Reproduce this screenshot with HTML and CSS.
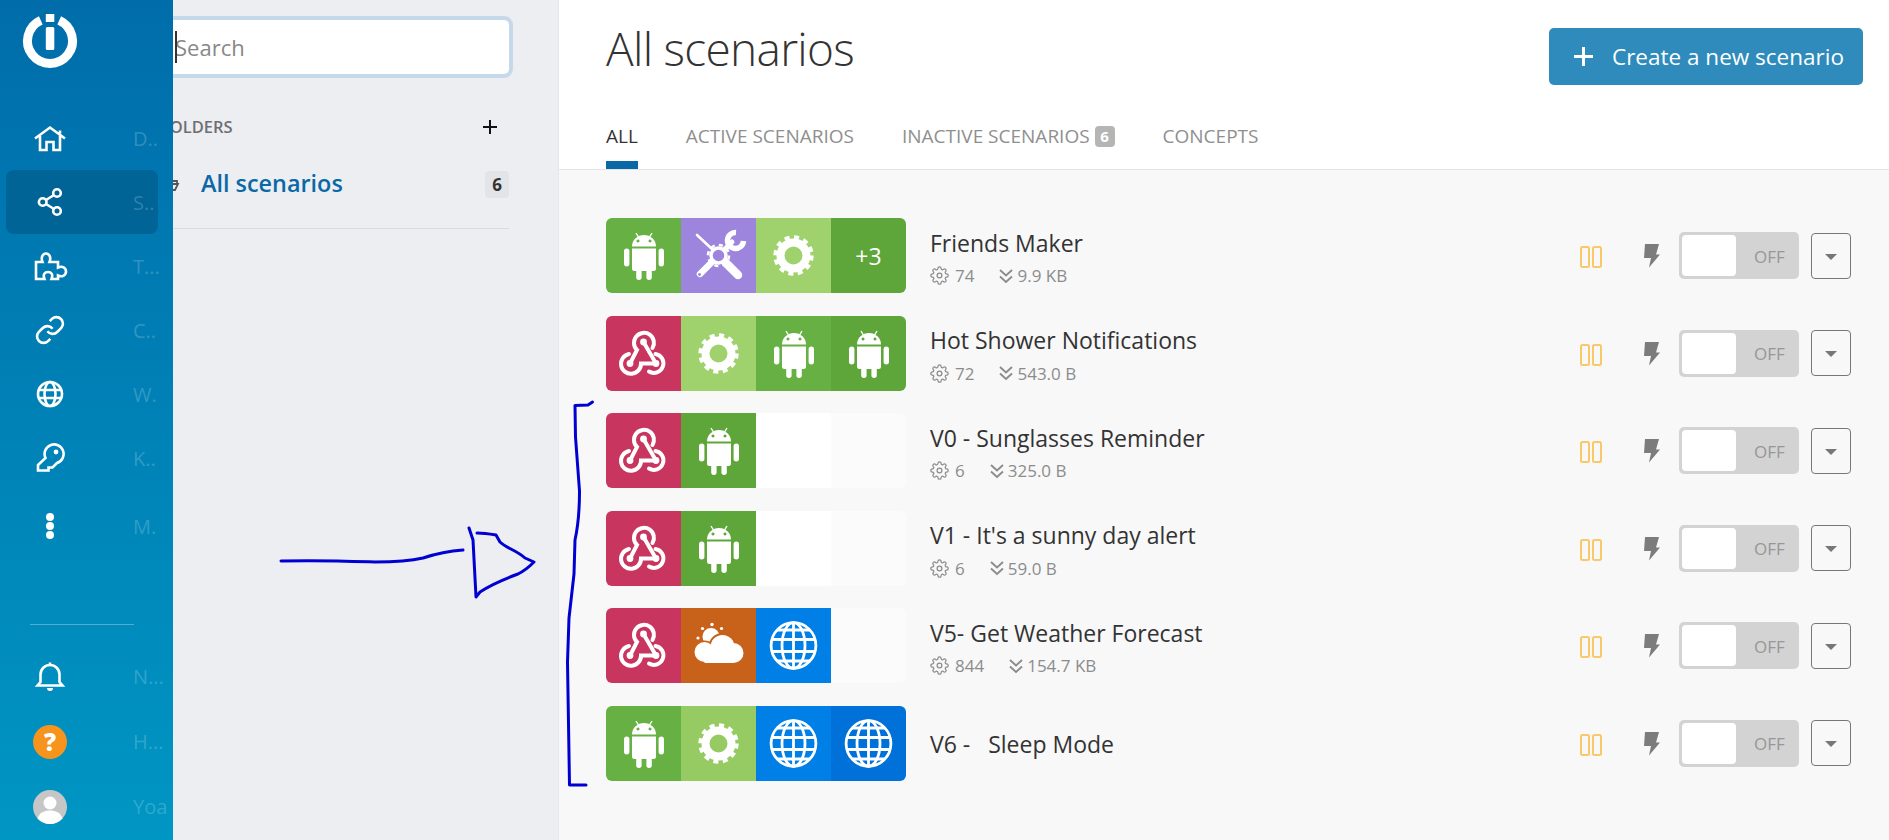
FILE: index.html
```html
<!DOCTYPE html>
<html lang="en">
  <head>
    <meta charset="UTF-8" />
    <meta name="viewport" content="width=device-width, initial-scale=1.0" />
    <title>All scenarios</title>
    <link rel="stylesheet" href="styles.css">
  </head>
  <body>
    <!-- Shared icons -->
    <svg class="icon-defs" aria-hidden="true">
      <symbol id="android" viewBox="0 0 75 75">
        <path fill-rule="evenodd" d="M26 28.5a12 11.5 0 0 1 24 0zM32 21.5a1.5 1.5 0 1 0 .01 0zM44 21.5a1.5 1.5 0 1 0 .01 0z" fill="currentColor"/>
        <path d="M30 15l3 5M46 15l-3 5" stroke="currentColor" stroke-width="1.4" fill="none"/>
        <path d="M26 30.5h24v20a2.5 2.5 0 0 1-2.5 2.5h-19a2.5 2.5 0 0 1-2.5-2.5z" fill="currentColor"/>
        <rect x="18" y="30.5" width="5.4" height="18" rx="2.7" fill="currentColor"/>
        <rect x="52.6" y="30.5" width="5.4" height="18" rx="2.7" fill="currentColor"/>
        <rect x="30.2" y="50" width="5.4" height="12" rx="2.7" fill="currentColor"/>
        <rect x="40.4" y="50" width="5.4" height="12" rx="2.7" fill="currentColor"/>
      </symbol>
      <symbol id="gear" viewBox="0 0 75 75">
        <circle cx="37.5" cy="37.5" r="13" fill="none" stroke="currentColor" stroke-width="8"/>
        <circle cx="37.5" cy="37.5" r="18" fill="none" stroke="currentColor" stroke-width="4.4" stroke-dasharray="5 4.42"/>
      </symbol>
      <symbol id="webhook" viewBox="0 0 75 75">
        <g fill="none" stroke="currentColor" stroke-width="4" stroke-linecap="round">
          <path d="M24 47.5L31 34A10 10 0 1 1 46.5 32"/>
          <path d="M37.5 26L50 47.5"/>
          <path d="M23 38A10 10 0 1 0 35 47.5H50"/>
          <path d="M49.5 38A9.5 9.5 0 1 1 43 55.5"/>
        </g>
        <g fill="currentColor">
          <circle cx="37.5" cy="26" r="3.4"/>
          <circle cx="24" cy="47.5" r="3.4"/>
          <circle cx="50" cy="47.5" r="3.4"/>
        </g>
      </symbol>
      <symbol id="globe" viewBox="0 0 75 75">
        <g fill="none" stroke="currentColor" stroke-width="2.8">
          <ellipse cx="37.5" cy="37.5" rx="22.4" ry="22.8"/>
          <ellipse cx="37.5" cy="37.5" rx="11.5" ry="22.8"/>
          <path d="M37.5 15v45M15.5 31.5h44M15.5 43.5h44M21 22h33M21 53h33"/>
        </g>
      </symbol>
      <symbol id="cog" viewBox="0 0 24 24">
        <circle cx="12" cy="12" r="3"/>
        <path d="M19.4 15a1.65 1.65 0 0 0 .33 1.82l.06.06a2 2 0 0 1 0 2.83 2 2 0 0 1-2.83 0l-.06-.06a1.65 1.65 0 0 0-1.82-.33 1.65 1.65 0 0 0-1 1.51V21a2 2 0 0 1-2 2 2 2 0 0 1-2-2v-.09A1.65 1.65 0 0 0 9 19.4a1.65 1.65 0 0 0-1.82.33l-.06.06a2 2 0 0 1-2.83 0 2 2 0 0 1 0-2.83l.06-.06a1.65 1.65 0 0 0 .33-1.82 1.65 1.65 0 0 0-1.51-1H3a2 2 0 0 1-2-2 2 2 0 0 1 2-2h.09A1.65 1.65 0 0 0 4.6 9a1.65 1.65 0 0 0-.33-1.82l-.06-.06a2 2 0 0 1 0-2.83 2 2 0 0 1 2.83 0l.06.06a1.65 1.65 0 0 0 1.82.33H9a1.65 1.65 0 0 0 1-1.51V3a2 2 0 0 1 2-2 2 2 0 0 1 2 2v.09a1.65 1.65 0 0 0 1 1.51 1.65 1.65 0 0 0 1.82-.33l.06-.06a2 2 0 0 1 2.83 0 2 2 0 0 1 0 2.83l-.06.06a1.65 1.65 0 0 0-.33 1.82V9a1.65 1.65 0 0 0 1.51 1H21a2 2 0 0 1 2 2 2 2 0 0 1-2 2h-.09a1.65 1.65 0 0 0-1.51 1z"/>
      </symbol>
      <symbol id="chevrons" viewBox="0 0 16 16">
        <path d="M2 2l6 5.5L14 2M2 8.5L8 14l6-5.5" fill="none" stroke="currentColor" stroke-width="1.9"/>
      </symbol>
      <symbol id="pause" viewBox="0 0 22 22">
        <rect x="1" y="1" width="8" height="20" rx="1.5" fill="none" stroke="#f9c869" stroke-width="2"/>
        <rect x="13" y="1" width="8" height="20" rx="1.5" fill="none" stroke="#f9c869" stroke-width="2"/>
      </symbol>
      <symbol id="bolt" viewBox="0 0 16 25">
        <path d="M1 1h14l-3 10.5h4L5 24.5l2-9.5H0z" fill="#7c7c7c"/>
      </symbol>
    </svg>

    <!-- Left menu -->
    <aside class="sidebar">
      <div class="logo">
        <svg width="60" height="60" viewBox="0 0 60 60">
          <path d="M20.8 9.4A22.5 22.5 0 1 0 39.2 9.4" fill="none" stroke="#fff" stroke-width="9"/>
          <rect x="25.8" y="3" width="8.5" height="8" fill="#fff"/>
          <rect x="25.8" y="16" width="8.5" height="23" rx="1.5" fill="#fff"/>
        </svg>
      </div>
      <nav class="nav">
        <a class="nav-item">
          <svg class="nav-icon" viewBox="0 0 40 30"><path d="M5 15.5L20 4.5 35 15.5M30 7.500v3M10 13v14h6.500v-8h7v8H30V13"/></svg>
          <span class="nav-label">D..</span>
        </a>
        <a class="nav-item active">
          <svg class="nav-icon" viewBox="0 0 40 30"><circle cx="27" cy="6" r="3.8"/><circle cx="12.7" cy="15" r="3.8"/><circle cx="27" cy="24" r="3.8"/><path d="M16 13l8-5M16 17l8 5"/></svg>
          <span class="nav-label">S..</span>
        </a>
        <a class="nav-item">
          <svg class="nav-icon" viewBox="0 0 40 30"><path d="M6 11h6.500c-2-5 .5-8.500 3.500-8.500s5.500 3.500 3.500 8.500H28v5.500c4.500-2 8 .5 8 4s-3.500 6-8 4V28h-6.500c2-5-.5-7-3.500-7s-5.500 2-3.500 7H6z"/></svg>
          <span class="nav-label">T...</span>
        </a>
        <a class="nav-item">
          <svg class="nav-icon" viewBox="0 0 40 30"><g transform="translate(4.4 -.6) scale(1.3)" stroke-width="2"><path d="M10 13a5 5 0 0 0 7.54.54l3-3a5 5 0 0 0-7.07-7.07l-1.72 1.71"/><path d="M14 11a5 5 0 0 0-7.54-.54l-3 3a5 5 0 0 0 7.07 7.07l1.71-1.71"/></g></svg>
          <span class="nav-label">C..</span>
        </a>
        <a class="nav-item">
          <svg class="nav-icon" viewBox="0 0 40 30"><circle cx="20" cy="15" r="12"/><ellipse cx="20" cy="15" rx="5.5" ry="12"/><path d="M8.500 11h23M8.500 19h23"/></svg>
          <span class="nav-label">W.</span>
        </a>
        <a class="nav-item">
          <svg class="nav-icon" viewBox="0 0 40 30"><path d="M15.5 15A9.5 9.5 0 1 1 27 20L22.5 24.5H18.5V27.5H8V22z"/><circle class="dot" cx="26" cy="9" r="2.4"/></svg>
          <span class="nav-label">K..</span>
        </a>
        <a class="nav-item more-item">
          <svg class="nav-icon" viewBox="0 0 40 30"><circle class="dot" cx="20" cy="6" r="4"/><circle class="dot" cx="20" cy="15" r="4"/><circle class="dot" cx="20" cy="24" r="4"/></svg>
          <span class="nav-label">M.</span>
        </a>
      </nav>
      <div class="nav-divider"></div>
      <div class="nav-bottom">
        <a class="bottom-item">
          <svg class="nav-icon" viewBox="0 0 40 30"><path d="M10.5 20v-7.500a9.500 9.500 0 0 1 19 0V20l3 3.500h-25zM20 .5V3"/><path class="dot" d="M17 26h6a3 3 0 0 1-6 0z"/></svg>
          <span class="nav-label">N...</span>
        </a>
        <a class="bottom-item">
          <span class="nav-slot"><span class="help">?</span></span>
          <span class="nav-label">H...</span>
        </a>
        <a class="bottom-item">
          <span class="nav-slot">
            <svg class="avatar" viewBox="0 0 34 34">
              <circle cx="17" cy="17" r="17" fill="#c6c6c6"/>
              <circle cx="17" cy="13" r="6.5" fill="#fff"/>
              <path d="M4.5 28.500c2-6 7-8 12.500-8s10.500 2 12.500 8A17 17 0 0 1 17 34 17 17 0 0 1 4.500 28.500z" fill="#fff"/>
            </svg>
          </span>
          <span class="nav-label">Yoa</span>
        </a>
      </div>
    </aside>

    <!-- Folders -->
    <section class="panel">
      <div class="search">
        <span class="caret"></span>
        Search
      </div>
      <div class="folders-head">
        <span>FOLDERS</span>
        <svg class="folder-add" viewBox="0 0 14 14"><path d="M7 0v14M0 7h14" stroke="#111" stroke-width="2"/></svg>
      </div>
      <div class="folder-row">
        <svg class="folder-icon" viewBox="0 0 22 16"><path d="M2 3h6l2 2h8v3M2 3v11h14l3-6H6l-3 6" fill="none" stroke="#555" stroke-width="1.8"/></svg>
        <span class="folder-name">All scenarios</span>
        <span class="folder-count">6</span>
      </div>
      <div class="panel-divider"></div>
    </section>

    <!-- Main Content -->
    <main class="main">
      <header class="main-head">
        <div class="title-row">
          <h1>All scenarios</h1>
          <a class="create-btn">
            <svg viewBox="0 0 19 19"><path d="M9.5 0v19M0 9.5h19" stroke="#fff" stroke-width="3"/></svg>
            Create a new scenario
          </a>
        </div>
        <div class="tabs">
          <a class="tab selected">ALL</a>
          <a class="tab">ACTIVE SCENARIOS</a>
          <a class="tab">INACTIVE SCENARIOS <span class="tab-count">6</span></a>
          <a class="tab">CONCEPTS</a>
        </div>
      </header>

      <div class="list">
        <div class="row">
          <div class="strip">
            <div class="tile android-a"><svg><use href="#android"/></svg></div>
            <div class="tile tools">
              <svg viewBox="0 0 75 75">
                <g fill="none" stroke="#fff" stroke-linecap="round">
                  <path d="M16 17l16 15" stroke-width="2.6"/>
                  <path d="M45 45l12 12" stroke-width="8.5"/>
                  <path d="M19 56l12-12" stroke-width="6.5"/>
                  <path d="M44 31l7-7" stroke-width="5"/>
                  <path d="M55 14.5a8 8 0 1 0 7.5 8.5" stroke-width="5.5" stroke-linecap="butt"/>
                  <circle cx="37.5" cy="37.5" r="7.5" stroke-width="3.5"/>
                  <circle cx="37.5" cy="37.5" r="10.5" stroke-width="2.6" stroke-dasharray="4.1 4.15" stroke-linecap="butt"/>
                </g>
                <circle cx="18.5" cy="56.5" r="1.4" fill="#9d85dd"/>
              </svg>
            </div>
            <div class="tile gear-a"><svg><use href="#gear"/></svg></div>
            <div class="tile android-b more">+3</div>
          </div>
          <div class="info">
            <div class="name">Friends Maker</div>
            <div class="meta">
              <svg class="meta-cog"><use href="#cog"/></svg><span class="meta-ops">74</span>
              <svg class="meta-chev"><use href="#chevrons"/></svg><span>9.9 KB</span>
            </div>
          </div>
          <div class="controls">
            <svg class="pause"><use href="#pause"/></svg>
            <svg class="bolt"><use href="#bolt"/></svg>
            <div class="toggle"><span class="knob"></span><span class="off">OFF</span></div>
            <button class="drop"><span class="drop-caret"></span></button>
          </div>
        </div>

        <div class="row">
          <div class="strip">
            <div class="tile hook"><svg><use href="#webhook"/></svg></div>
            <div class="tile gear-a"><svg><use href="#gear"/></svg></div>
            <div class="tile android-a"><svg><use href="#android"/></svg></div>
            <div class="tile android-b"><svg><use href="#android"/></svg></div>
          </div>
          <div class="info">
            <div class="name">Hot Shower Notifications</div>
            <div class="meta">
              <svg class="meta-cog"><use href="#cog"/></svg><span class="meta-ops">72</span>
              <svg class="meta-chev"><use href="#chevrons"/></svg><span>543.0 B</span>
            </div>
          </div>
          <div class="controls">
            <svg class="pause"><use href="#pause"/></svg>
            <svg class="bolt"><use href="#bolt"/></svg>
            <div class="toggle"><span class="knob"></span><span class="off">OFF</span></div>
            <button class="drop"><span class="drop-caret"></span></button>
          </div>
        </div>

        <div class="row">
          <div class="strip">
            <div class="tile hook"><svg><use href="#webhook"/></svg></div>
            <div class="tile android-b"><svg><use href="#android"/></svg></div>
            <div class="tile empty-a"></div>
            <div class="tile empty-b"></div>
          </div>
          <div class="info">
            <div class="name">V0 - Sunglasses Reminder</div>
            <div class="meta">
              <svg class="meta-cog"><use href="#cog"/></svg><span class="meta-ops">6</span>
              <svg class="meta-chev"><use href="#chevrons"/></svg><span>325.0 B</span>
            </div>
          </div>
          <div class="controls">
            <svg class="pause"><use href="#pause"/></svg>
            <svg class="bolt"><use href="#bolt"/></svg>
            <div class="toggle"><span class="knob"></span><span class="off">OFF</span></div>
            <button class="drop"><span class="drop-caret"></span></button>
          </div>
        </div>

        <div class="row">
          <div class="strip">
            <div class="tile hook"><svg><use href="#webhook"/></svg></div>
            <div class="tile android-b"><svg><use href="#android"/></svg></div>
            <div class="tile empty-a"></div>
            <div class="tile empty-b"></div>
          </div>
          <div class="info">
            <div class="name">V1 - It's a sunny day alert</div>
            <div class="meta">
              <svg class="meta-cog"><use href="#cog"/></svg><span class="meta-ops">6</span>
              <svg class="meta-chev"><use href="#chevrons"/></svg><span>59.0 B</span>
            </div>
          </div>
          <div class="controls">
            <svg class="pause"><use href="#pause"/></svg>
            <svg class="bolt"><use href="#bolt"/></svg>
            <div class="toggle"><span class="knob"></span><span class="off">OFF</span></div>
            <button class="drop"><span class="drop-caret"></span></button>
          </div>
        </div>

        <div class="row">
          <div class="strip">
            <div class="tile hook"><svg><use href="#webhook"/></svg></div>
            <div class="tile weather">
              <svg viewBox="0 0 75 75">
                <g fill="#fff">
                  <circle cx="30" cy="28.5" r="8.5"/>
                  <circle cx="21.5" cy="20.5" r="1.6"/>
                  <circle cx="31" cy="16.5" r="1.7"/>
                  <circle cx="40.5" cy="20.5" r="1.6"/>
                  <circle cx="17" cy="30" r="1.6"/>
                </g>
                <g fill="#fff" stroke="#c8621a" stroke-width="4">
                  <circle cx="41.5" cy="39" r="12"/>
                  <circle cx="23.5" cy="44" r="9.5"/>
                </g>
                <g fill="#fff">
                  <circle cx="41.5" cy="39" r="12"/>
                  <circle cx="23.5" cy="44" r="10"/>
                  <circle cx="52.5" cy="45" r="10"/>
                  <rect x="23.5" y="42" width="29" height="13"/>
                </g>
              </svg>
            </div>
            <div class="tile globe-a"><svg><use href="#globe"/></svg></div>
            <div class="tile empty-b"></div>
          </div>
          <div class="info">
            <div class="name">V5- Get Weather Forecast</div>
            <div class="meta">
              <svg class="meta-cog"><use href="#cog"/></svg><span class="meta-ops">844</span>
              <svg class="meta-chev"><use href="#chevrons"/></svg><span>154.7 KB</span>
            </div>
          </div>
          <div class="controls">
            <svg class="pause"><use href="#pause"/></svg>
            <svg class="bolt"><use href="#bolt"/></svg>
            <div class="toggle"><span class="knob"></span><span class="off">OFF</span></div>
            <button class="drop"><span class="drop-caret"></span></button>
          </div>
        </div>

        <div class="row">
          <div class="strip">
            <div class="tile android-a"><svg><use href="#android"/></svg></div>
            <div class="tile gear-b"><svg><use href="#gear"/></svg></div>
            <div class="tile globe-a"><svg><use href="#globe"/></svg></div>
            <div class="tile globe-b"><svg><use href="#globe"/></svg></div>
          </div>
          <div class="info">
            <div class="name">V6 -&nbsp;&nbsp; Sleep Mode</div>
          </div>
          <div class="controls">
            <svg class="pause"><use href="#pause"/></svg>
            <svg class="bolt"><use href="#bolt"/></svg>
            <div class="toggle"><span class="knob"></span><span class="off">OFF</span></div>
            <button class="drop"><span class="drop-caret"></span></button>
          </div>
        </div>
      </div>
    </main>

    <!-- Hand drawn marks on top of the screenshot -->
    <svg class="marks" viewBox="0 0 1889 840">
      <g fill="none" stroke="#0000d2" stroke-width="3" stroke-linecap="round" stroke-linejoin="round">
        <path d="M281 561C320 560 345 561 375 562C395 562 410 561 423 558C438 553 448 551 463 550"/>
        <path d="M469 528L473 540L476 597L480 592C489 586 499 581 518 574C526 570 530 566 534 562L525 558C516 550 506 548 500 542L496 535C490 534 484 533 477 533"/>
        <path d="M592.5 402L588 405L575 405.5L575.5 437L579.5 491C579.5 510 579 522 575 540L574 574L569 618L567.5 662L569.5 785H586"/>
      </g>
    </svg>
  </body>
</html>
```

FILE: styles.css
```css
* {
  box-sizing: border-box;
}

body {
  margin: 0;
  height: 840px;
  display: flex;
  overflow: hidden;
  font-family: "Open Sans", "Noto Sans", sans-serif;
  background-color: #f8f8f9;
  color: #333;
}

a {
  text-decoration: none;
}

.icon-defs {
  position: absolute;
  width: 0;
  height: 0;
}

/* Sidebar */
.sidebar {
  position: relative;
  z-index: 2;
  flex: 0 0 173px;
  background: linear-gradient(180deg, #006daa 0%, #0096c3 100%);
}

.logo {
  height: 106px;
  padding: 11px 0 0 20px;
}

.logo svg {
  display: block;
}

.nav-item,
.bottom-item {
  display: flex;
  align-items: center;
  width: 152px;
  margin-left: 6px;
  padding-left: 24px;
}

.nav-item {
  height: 64px;
}

.nav-item.active {
  background-color: #006496;
  border-radius: 8px;
}

.nav-item.more-item {
  margin-top: 4px;
}

.bottom-item {
  height: 65px;
}

.nav-icon {
  flex: 0 0 40px;
  width: 40px;
  height: 30px;
  fill: none;
  stroke: #fff;
  stroke-width: 2.6;
}

.nav-icon .dot {
  fill: #fff;
  stroke: none;
}

.nav-slot {
  flex: 0 0 40px;
  display: flex;
  justify-content: center;
}

.nav-label {
  margin-left: 63px;
  font-size: 20px;
  white-space: nowrap;
  color: rgba(255, 255, 255, 0.2);
}

.nav-divider {
  height: 1px;
  width: 104px;
  margin: 66px 0 19px 30px;
  background-color: rgba(255, 255, 255, 0.3);
}

.help {
  width: 34px;
  height: 34px;
  border-radius: 50%;
  background-color: #f7941d;
  color: #fff;
  font-size: 24px;
  font-weight: 800;
  line-height: 34px;
  text-align: center;
}

.avatar {
  width: 34px;
  height: 34px;
}

/* Folder panel, its left edge runs under the sidebar */
.panel {
  flex: 0 0 415px;
  margin-left: -30px;
  padding: 20px 49px 0 7px;
  background-color: #eceef2;
}

.search {
  position: relative;
  height: 54px;
  padding-left: 25px;
  background-color: #fff;
  border-radius: 5px;
  box-shadow: 0 0 0 4px #c6d9ea;
  font-size: 22px;
  line-height: 55px;
  color: #888;
}

.caret {
  position: absolute;
  left: 25px;
  top: 11px;
  width: 2px;
  height: 32px;
  background-color: #333;
}

.folders-head {
  display: flex;
  align-items: center;
  justify-content: space-between;
  height: 26px;
  margin-top: 39px;
  padding: 0 12px 0 11px;
  font-size: 16.5px;
  font-weight: 600;
  color: #6e6e72;
}

.folder-add {
  width: 14px;
  height: 14px;
  margin-top: 2px;
}

.folder-row {
  display: flex;
  align-items: center;
  height: 40px;
  margin-top: 25px;
}

.folder-icon {
  flex: 0 0 22px;
  height: 16px;
  margin-left: 9px;
}

.folder-name {
  flex: 1;
  margin-top: -2px;
  margin-left: 20px;
  font-size: 23.4px;
  font-weight: 600;
  color: #0a68a6;
}

.folder-count {
  width: 24px;
  height: 27px;
  border-radius: 4px;
  background-color: #e3e4e8;
  font-size: 17px;
  font-weight: 700;
  line-height: 27px;
  text-align: center;
}

.panel-divider {
  height: 1px;
  margin-top: 24px;
  background-color: #d9dadf;
}

/* Main */
.main {
  flex: 1;
  border-left: 1px solid #e6e8ec;
  background-color: #f8f8f9;
}

.main-head {
  height: 170px;
  padding: 28px 26px 0 47px;
  background-color: #fff;
  border-bottom: 1px solid #e4e4e6;
}

.title-row {
  display: flex;
  justify-content: space-between;
  height: 57px;
}

h1 {
  margin: -10px 0 0;
  font-size: 46px;
  font-weight: 300;
  letter-spacing: -0.7px;
  line-height: 60px;
  color: #333;
}

.create-btn {
  display: flex;
  align-items: center;
  width: 314px;
  height: 57px;
  padding-left: 25px;
  border-radius: 5px;
  background-color: #2e8bbb;
  color: #fff;
  font-size: 22.5px;
}

.create-btn svg {
  width: 19px;
  height: 19px;
  margin-right: 19px;
}

.tabs {
  display: flex;
  gap: 48px;
  margin-top: 34px;
}

.tab {
  height: 50px;
  font-size: 19px;
  line-height: 34px;
  color: #8f8f8f;
}

.tab.selected {
  color: #333;
  border-bottom: 8px solid #0a68a6;
}

.tab-count {
  display: inline-block;
  width: 20px;
  height: 21px;
  border-radius: 4px;
  background-color: #b5b5b5;
  color: #fff;
  font-size: 15px;
  font-weight: 700;
  line-height: 21px;
  text-align: center;
  vertical-align: 1px;
}

.list {
  display: flex;
  flex-direction: column;
  gap: 22.6px;
  padding: 48px 38px 0 47px;
}

.row {
  display: flex;
  align-items: center;
  height: 75px;
}

.strip {
  display: flex;
  flex: 0 0 300px;
  height: 75px;
  border-radius: 6px;
  overflow: hidden;
}

.tile {
  display: flex;
  flex: 0 0 75px;
  align-items: center;
  justify-content: center;
  color: #fff;
}

.tile svg {
  width: 75px;
  height: 75px;
}

.android-a {
  background-color: #67b044;
}

.android-b {
  background-color: #5ea63a;
}

.tools {
  background-color: #9d85dd;
}

.gear-a {
  background-color: #9fd26d;
}

.gear-b {
  background-color: #96ca62;
}

.hook {
  background-color: #c8355f;
}

.weather {
  background-color: #c8621a;
}

.globe-a {
  background-color: #007fe6;
}

.globe-b {
  background-color: #0071d9;
}

.empty-a {
  background-color: #fff;
}

.empty-b {
  background-color: #fbfbfc;
}

.more {
  font-size: 23px;
}

.info {
  flex: 1;
  margin-left: 24px;
  padding-top: 1px;
}

.name {
  font-size: 23px;
  line-height: 30px;
  color: #333;
}

.meta {
  display: flex;
  align-items: center;
  height: 24px;
  margin: 6px 0 -3px;
  font-size: 17px;
  color: #8c8c8c;
}

.meta-cog {
  width: 19px;
  height: 19px;
  margin-right: 6px;
  fill: none;
  stroke: #8c8c8c;
  stroke-width: 1.6;
}

.meta-ops {
  margin-right: 24px;
}

.meta-chev {
  width: 16px;
  height: 16px;
  margin-right: 3px;
  color: #8c8c8c;
}

.controls {
  display: flex;
  align-items: center;
}

.pause {
  width: 22px;
  height: 22px;
  margin-top: 3px;
}

.bolt {
  width: 16px;
  height: 25px;
  margin-left: 42px;
}

.toggle {
  display: flex;
  align-items: center;
  width: 120px;
  height: 47px;
  margin-left: 19px;
  padding: 3px;
  border-radius: 5px;
  background-color: #d3d3d3;
}

.knob {
  width: 54px;
  height: 41px;
  border-radius: 4px;
  background-color: #fff;
}

.off {
  margin-top: 1px;
  margin-left: 18px;
  font-size: 17px;
  color: #979797;
}

.drop {
  display: flex;
  align-items: center;
  justify-content: center;
  width: 40px;
  height: 46px;
  margin-left: 12px;
  padding: 0;
  border: 1px solid #777;
  border-radius: 4px;
  background-color: #f8f8f9;
}

.drop-caret {
  width: 0;
  height: 0;
  margin-top: 2px;
  border-left: 6px solid transparent;
  border-right: 6px solid transparent;
  border-top: 6px solid #777;
}

/* Pen marks */
.marks {
  position: absolute;
  top: 0;
  left: 0;
  z-index: 3;
  width: 1889px;
  height: 840px;
  pointer-events: none;
}
```
